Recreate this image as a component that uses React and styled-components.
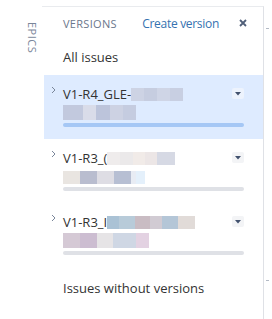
import styled, { createGlobalStyle } from "styled-components"

const GlobalStyle = createGlobalStyle`
  html, body {
    margin: 0;
    padding: 0;
    background: #fff;
  }
  body {
    width: 272px;
    height: 319px;
    overflow: hidden;
    font-family: "Open Sans", "Noto Sans", sans-serif;
    color: #333;
  }
`

const Page = styled.div`
  display: flex;
  height: 319px;
  padding-top: 6px;
  box-sizing: border-box;
`

// colonne gauche "EPICS"
const EpicStrip = styled.div`
  width: 42px;
  flex: none;
  padding: 16px 0 0 27px;
  box-sizing: border-box;
`

const EpicLabel = styled.div`
  writing-mode: vertical-rl;
  font-size: 11px;
  line-height: 10px;
  letter-spacing: 0.5px;
  color: #7a869a;
`

const Panel = styled.aside`
  width: 222px;
  flex: none;
  padding-left: 2px;
  border-top: 1px solid #e9ebee;
  border-right: 1px solid #dfe1e6;
  box-sizing: border-box;
  display: flex;
  flex-direction: column;
`

const Header = styled.div`
  display: flex;
  align-items: center;
  height: 32px;
  padding: 0 15px 0 19px;
`

const Title = styled.h2`
  margin: 0;
  font-size: 11px;
  font-weight: 400;
  letter-spacing: 0.3px;
  color: #6b778c;
`

const CreateLink = styled.a`
  margin-left: auto;
  font-size: 12px;
  letter-spacing: -0.3px;
  color: #3572b0;
  text-decoration: none;
`

const CloseButton = styled.button`
  margin-left: 19px;
  width: 10px;
  height: 10px;
  padding: 0;
  border: 0;
  background: none;
  display: flex;
  align-items: center;
  justify-content: center;
`

const FilterRow = styled.div`
  display: flex;
  align-items: center;
  height: ${p => p.$h || 36}px;
  padding-left: 19px;
  font-size: 13px;
  color: #333;
`

const Item = styled.div`
  display: grid;
  grid-template-columns: 19px 1fr 12px;
  grid-template-rows: 16px 18px 7px;
  padding: 11px 19px 12px 0;
  background: ${p => (p.$selected ? "#deebff" : "transparent")};
`

const Toggle = styled.div`
  grid-column: 1;
  grid-row: 1;
  display: flex;
  align-items: flex-start;
  padding-left: 7px;
`

const Name = styled.div`
  grid-column: 2;
  grid-row: 1;
  display: flex;
  align-items: center;
  font-size: 13px;
  line-height: 16px;
  color: #333;
  white-space: nowrap;
`

const Sub = styled.div`
  grid-column: 2;
  grid-row: 2;
  display: flex;
  align-items: flex-end;
`

const Menu = styled.div`
  grid-column: 3;
  grid-row: 1;
  margin-top: 2px;
  height: 11px;
  display: flex;
  align-items: center;
  justify-content: center;
  border-radius: 2px;
  background: ${p => (p.$selected ? "#edf3fd" : "#f3f4f6")};
`

const Bar = styled.div`
  grid-column: 2 / 4;
  grid-row: 3;
  align-self: end;
  height: 4px;
  border-radius: 2px;
  background: ${p => (p.$selected ? "#a5c7f5" : "#dfe1e6")};
`

// noms floutés dans la capture
const Mosaic = styled.span`
  display: inline-flex;
  height: ${p => p.$h}px;
`

const Tile = styled.span`
  width: ${p => p.$w}px;
  background: ${p => p.$c};
`

const Gutter = styled.div`
  flex: 1;
  display: flex;
  flex-direction: column;
  justify-content: space-between;
  padding: 22px 0 38px 2px;
`

const Tick = styled.span`
  width: 3px;
  height: 1px;
  background: #b3bac5;
`

const versions = [
  {
    id: 1,
    name: "V1-R4_GLE-",
    selected: true,
    line1: [[13, "#cdd3e4"], [13, "#c6cde0"], [13, "#cfd5e6"], [13, "#c8cfe2"]],
    line2: [[20, "#c2c9de"], [13, "#d9dce9"], [14, "#bcc4db"], [13, "#cdd2e3"], [13, "#c5cce0"]],
    h2: 15,
  },
  {
    id: 2,
    name: "V1-R3_(",
    line1: [[13, "#efecec"], [13, "#ebe9ea"], [12, "#f1ebe8"], [12, "#ece6e6"], [18, "#d6d9e4"]],
    line2: [[17, "#e9e5e1"], [17, "#b9bdcf"], [17, "#dedde4"], [17, "#b7bfd3"], [5, "#e8ecf4"], [9, "#e4f0fb"]],
    h2: 13,
  },
  {
    id: 3,
    name: "V1-R3_I",
    line1: [[12, "#aac2d5"], [16, "#b8cbd9"], [15, "#c9bcc3"], [12, "#d1cbd3"], [16, "#b4c6d7"], [17, "#e1dbd8"]],
    line2: [[17, "#d5c9d5"], [17, "#ccbdd1"], [16, "#e6e4e6"], [23, "#cfd7e4"], [13, "#e3d2e2"]],
    h2: 15,
  },
]

function Chevron() {
  return (
    <svg width="5" height="8" viewBox="0 0 5 8" style={{ display: "block" }}>
      <path d="M1 1 L4 4 L1 7" fill="none" stroke="#7a869a" strokeWidth="1" />
    </svg>
  )
}

function VersionItem({ version }) {
  return (
    <Item $selected={version.selected}>
      <Toggle><Chevron /></Toggle>
      <Name>
        {version.name}
        <Mosaic $h={13}>
          {version.line1.map(([w, c], i) => <Tile key={i} $w={w} $c={c} />)}
        </Mosaic>
      </Name>
      <Menu $selected={version.selected}>
        <svg width="6" height="4" viewBox="0 0 6 4">
          <path d="M0 0 H6 L3 3.5 Z" fill="#42526e" />
        </svg>
      </Menu>
      <Sub>
        <Mosaic $h={version.h2}>
          {version.line2.map(([w, c], i) => <Tile key={i} $w={w} $c={c} />)}
        </Mosaic>
      </Sub>
      <Bar $selected={version.selected} />
    </Item>
  )
}

export default function App() {
  return (
    <>
      <GlobalStyle />
      <Page>
        <EpicStrip>
          <EpicLabel>EPICS</EpicLabel>
        </EpicStrip>
        <Panel>
          <Header>
            <Title>VERSIONS</Title>
            <CreateLink href="#">Create version</CreateLink>
            <CloseButton aria-label="Close">
              <svg width="8" height="8" viewBox="0 0 8 8">
                <path d="M1 1 L7 7 M7 1 L1 7" stroke="#505f79" strokeWidth="1.8" />
              </svg>
            </CloseButton>
          </Header>
          <FilterRow>All issues</FilterRow>
          {versions.map(v => <VersionItem key={v.id} version={v} />)}
          <FilterRow $h={42}>Issues without versions</FilterRow>
        </Panel>
        <Gutter>
          <Tick />
          <Tick />
        </Gutter>
      </Page>
    </>
  )
}
